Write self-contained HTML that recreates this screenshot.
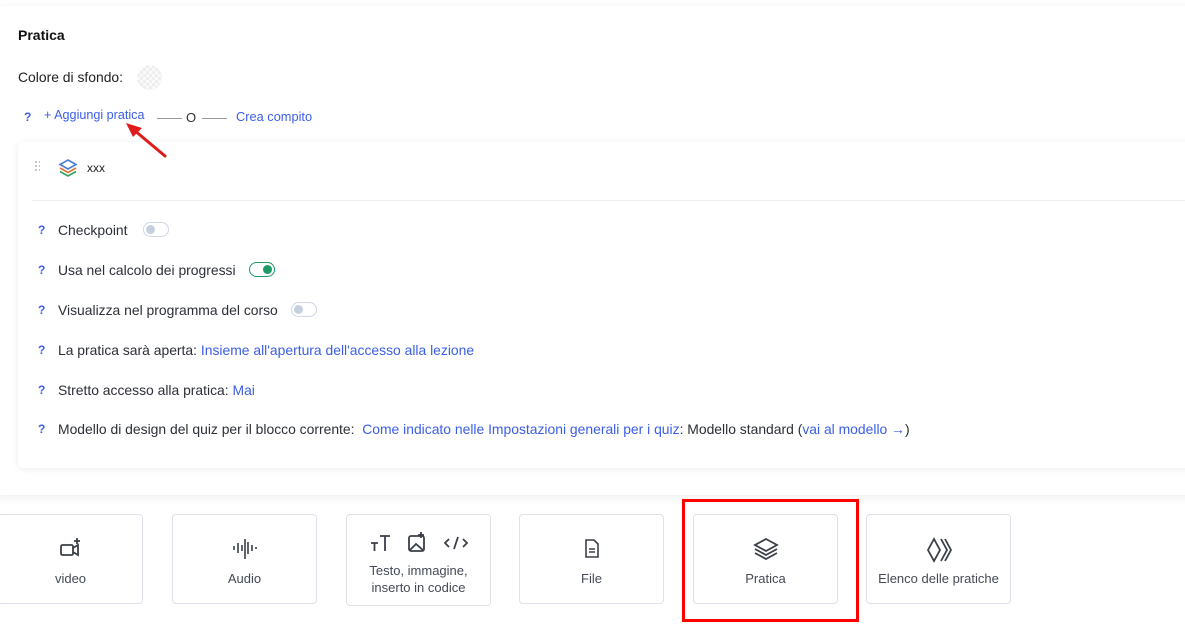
<!DOCTYPE html>
<html><head><meta charset="utf-8"><style>
*{box-sizing:border-box;margin:0;padding:0}
body{width:1185px;height:642px;background:#fff;font-family:"Liberation Sans",sans-serif;font-size:13.9px;color:#2b2f36;position:relative;overflow:hidden}
.abs{position:absolute}
.outer{left:-10px;top:6px;width:1210px;height:489px;border-radius:10px;background:#fff;box-shadow:0 2px 10px rgba(0,0,0,.07)}
.inner{left:18px;top:142px;width:1180px;height:326px;border-radius:6px;background:#fff;box-shadow:0 1px 8px rgba(0,0,0,.08)}
.blue{color:#3b5ee8}
.q{color:#3b5ee8;font-weight:bold;font-size:12px}
.tog{width:26px;height:15px;border:1px solid #cfd6e4;border-radius:8px;background:#fff}
.tog i{position:absolute;left:2px;top:2px;width:9px;height:9px;border-radius:50%;background:#c6cfdd}
.tog.on{border-color:#1a9a64}
.tog.on i{left:13px;background:#1a9a64}
.btn{top:514px;width:145px;height:90px;border:1px solid #dfe0ea;border-radius:4px;background:#fff;text-align:center;color:#444a55;font-size:13px}
.btn .l{position:absolute;left:0;right:0;top:56px}
.btn svg{position:absolute;left:50%;top:22px;transform:translateX(-50%)}
</style></head><body>
<div class="abs outer"></div>
<div class="abs" style="left:18px;top:27px;font-weight:bold;font-size:14px;color:#111">Pratica</div>
<div class="abs" style="left:18px;top:69px;color:#222">Colore di sfondo:</div>
<div class="abs" style="left:137px;top:65px;width:25px;height:25px;border-radius:50%;background:repeating-conic-gradient(#eee 0 25%,#fafafa 0 50%) 0 0/6px 6px"></div>
<div class="abs q" style="left:24px;top:110px">?</div>
<div class="abs blue" style="left:44px;top:108px;font-size:12.6px">+ Aggiungi pratica</div>
<div class="abs" style="left:157px;top:118px;width:25px;height:1px;background:#999"></div>
<div class="abs" style="left:186px;top:110px;font-size:13px;color:#333">O</div>
<div class="abs" style="left:202px;top:118px;width:25px;height:1px;background:#999"></div>
<div class="abs blue" style="left:236px;top:109px;font-size:12.8px">Crea compito</div>
<div class="abs inner"></div>
<svg class="abs" style="left:120px;top:118px;z-index:5" width="50" height="42"><line x1="45" y1="38" x2="14" y2="12" stroke="#e01b1b" stroke-width="3" stroke-linecap="round"/><polygon points="6,5 22,10 13,19" fill="#e01b1b"/></svg>
<div class="abs" style="left:34px;top:160px;width:6px;height:12px;background:radial-gradient(circle,#bbb 0.8px,transparent 1.2px) 0 0/4px 4px"></div>
<svg class="abs" style="left:58px;top:158px" width="20" height="20" viewBox="0 0 20 20" fill="none" stroke-width="1.6"><path d="M10 2 L18 6.5 L10 11 L2 6.5Z" stroke="#4a7bd8"/><path d="M2 10 L10 14.5 L18 10" stroke="#e0732e"/><path d="M2 13.5 L10 18 L18 13.5" stroke="#2aa55e"/></svg>
<div class="abs" style="left:87px;top:161px;font-size:12px;color:#222">xxx</div>
<div class="abs" style="left:32px;top:200px;width:1160px;height:1px;background:#eee"></div>

<div class="abs q" style="left:38px;top:223px">?</div><div class="abs" style="left:58px;top:222px">Checkpoint</div>
<div class="abs tog" style="left:143px;top:222px"><i></i></div>
<div class="abs q" style="left:38px;top:263px">?</div><div class="abs" style="left:58px;top:262px">Usa nel calcolo dei progressi</div>
<div class="abs tog on" style="left:249px;top:262px"><i></i></div>
<div class="abs q" style="left:38px;top:303px">?</div><div class="abs" style="left:58px;top:302px">Visualizza nel programma del corso</div>
<div class="abs tog" style="left:291px;top:302px"><i></i></div>
<div class="abs q" style="left:38px;top:343px">?</div><div class="abs" style="left:58px;top:342px">La pratica sarà aperta: <span class="blue">Insieme all'apertura dell'accesso alla lezione</span></div>
<div class="abs q" style="left:38px;top:383px">?</div><div class="abs" style="left:58px;top:382px">Stretto accesso alla pratica: <span class="blue">Mai</span></div>
<div class="abs q" style="left:38px;top:422px">?</div><div class="abs" style="left:58px;top:421px">Modello di design del quiz per il blocco corrente: &nbsp;<span class="blue">Come indicato nelle Impostazioni generali per i quiz</span>: Modello standard (<span class="blue">vai al modello →</span>)</div>

<div class="abs btn" style="left:-2px"><svg width="24" height="22" viewBox="0 0 24 22" fill="none" stroke="#3a3f48" stroke-width="1.8"><rect x="2" y="8" width="12" height="10" rx="1.5"/><path d="M14 11 L19 8 V18 L14 15"/><path d="M18 1v6M15 4h6"/></svg><div class="l">video</div></div>
<div class="abs btn" style="left:172px"><svg width="28" height="22" viewBox="0 0 28 22" stroke="#3a3f48" stroke-width="1.6"><path d="M3 9v4M7 6v10M11 8v6M14 2v20M17 5v12M21 8v6M25 10v2"/></svg><div class="l">Audio</div></div>
<div class="abs btn" style="left:346px;height:92px"><svg style="top:16px" width="100" height="22" viewBox="0 0 100 22" fill="none" stroke="#3a3f48" stroke-width="1.8"><path d="M2 12h7M5.5 12v8M11 5h10M16 5v15"/><rect x="40" y="5" width="15" height="15" rx="2"/><path d="M41 19l6-6 8 7M52 1v6M49 4h6"/><path d="M80 8l-4 4 4 4M94 8l4 4-4 4M89 6l-4 12"/></svg><div class="l" style="top:47px;line-height:17px">Testo, immagine,<br>inserto in codice</div></div>
<div class="abs btn" style="left:519px"><svg width="16" height="22" viewBox="0 0 16 22" fill="none" stroke="#3a3f48" stroke-width="1.6"><path d="M2 3h8l4 4v13H2Z"/><path d="M5 12h6M5 15h6"/></svg><div class="l">File</div></div>
<div class="abs btn" style="left:693px"><svg width="26" height="24" viewBox="0 0 26 24" fill="none" stroke="#3a3f48" stroke-width="1.8"><path d="M13 2L24 8L13 14L2 8Z"/><path d="M2 12L13 18L24 12"/><path d="M2 16L13 22L24 16"/></svg><div class="l">Pratica</div></div>
<div class="abs btn" style="left:866px"><svg width="26" height="26" viewBox="0 0 26 26" fill="none" stroke="#3a3f48" stroke-width="1.8"><path d="M8 2L2 13L8 24L14 13Z"/><path d="M15 2L21 13L15 24"/><path d="M19 2L25 13L19 24"/></svg><div class="l">Elenco delle pratiche</div></div>
<div class="abs" style="left:682px;top:499px;width:177px;height:123px;border:3px solid #f00"></div>
</body></html>
